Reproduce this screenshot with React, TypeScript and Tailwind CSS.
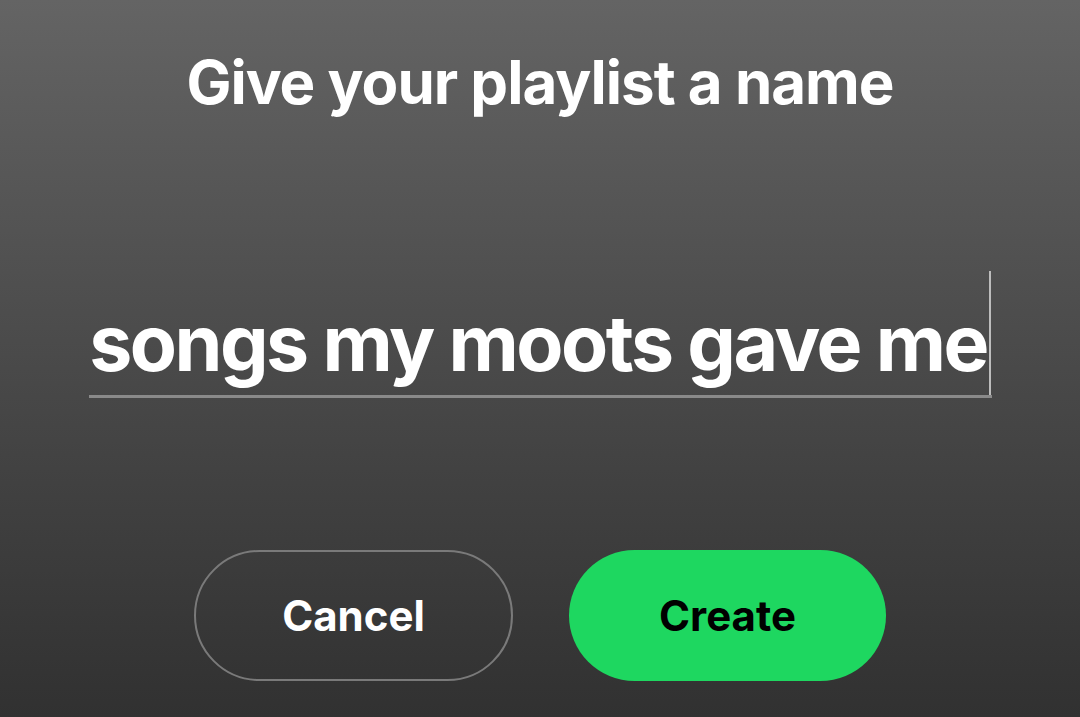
export default function App() {
  return (
    <div
      className="flex h-[717px] w-[1080px] flex-col items-center overflow-hidden bg-gradient-to-b from-[#646464] to-[#313131] text-white"
      style={{ fontFamily: "Inter, 'Noto Sans', sans-serif" }}
    >
      <h1 className="mt-[46px] whitespace-nowrap text-[60px] font-bold leading-[72px] tracking-[-1px]">
        Give your playlist a name
      </h1>

      <div className="mt-[153px] flex w-[903px] justify-center border-b-[3px] border-[#8a8a8a] pb-[2px]">
        <div className="flex items-end">
          <span className="whitespace-nowrap text-[77px] font-bold leading-[100px] tracking-[-2.5px]">
            songs my moots gave me
          </span>
          <span className="mb-[-2px] ml-[2px] h-[124px] w-[2px] bg-[#bdbdbd]" />
        </div>
      </div>

      <div className="mt-[152px] flex gap-[56px]">
        <button className="flex h-[131px] w-[319px] items-center justify-center rounded-full border-2 border-[#7a7a7a] text-[42px] font-bold text-white">
          Cancel
        </button>
        <button className="flex h-[131px] w-[317px] items-center justify-center rounded-full bg-[#1ed760] text-[42px] font-bold text-black">
          Create
        </button>
      </div>
    </div>
  );
}
